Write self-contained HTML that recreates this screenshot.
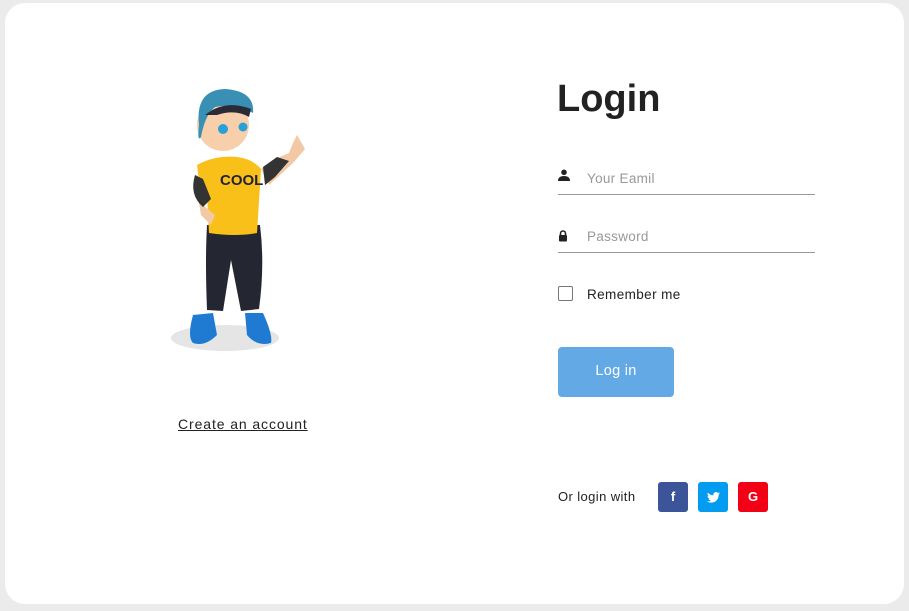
<!DOCTYPE html>
<html><head><meta charset="utf-8"><style>
*{margin:0;padding:0;box-sizing:border-box}
body{width:909px;height:611px;background:#ebebeb;font-family:"Liberation Sans",sans-serif;position:relative;overflow:hidden}
.card{position:absolute;left:5px;top:3px;width:899px;height:601px;background:#fff;border-radius:20px}
.abs{position:absolute}
h1{position:absolute;left:557px;top:78px;font-size:38px;font-weight:bold;color:#222;letter-spacing:0px}
.inp{position:absolute;left:558px;width:257px;border-bottom:1px solid #999;height:20px}
.ph{position:absolute;left:29px;top:-4px;font-size:13.5px;color:#999;letter-spacing:0.3px}
.lbl{font-size:13.5px;color:#222;letter-spacing:0.4px}
.btn{position:absolute;left:558px;top:347px;width:116px;height:50px;background:#63a9e6;border-radius:4px;color:#fff;font-size:14.5px;text-align:center;line-height:48px;letter-spacing:0.3px}
.soc{position:absolute;top:482px;width:30px;height:30px;border-radius:3px;color:#fff;font-weight:bold;text-align:center;line-height:30px;font-size:13px}
</style></head><body>
<div class="card"></div>
<h1>Login</h1>
<div class="inp" style="top:175px"><svg class="abs" style="left:0;top:-6px" width="12" height="12" viewBox="0 0 12 12"><circle cx="6" cy="3.3" r="2.8" fill="#222"/><path d="M0 12 Q0 7 6 7 Q12 7 12 12Z" fill="#222"/></svg><span class="ph">Your Eamil</span></div>
<div class="inp" style="top:233px"><svg class="abs" style="left:0;top:-3px" width="10" height="12" viewBox="0 0 10 12"><path d="M2.5 5V3.5a2.5 2.5 0 0 1 5 0V5" stroke="#222" stroke-width="1.6" fill="none"/><rect x="1" y="5" width="8" height="6.5" rx="1" fill="#222"/></svg><span class="ph">Password</span></div>
<div class="abs" style="left:558px;top:286px;width:15px;height:15px;border:1px solid #777;border-radius:2px"></div>
<div class="abs lbl" style="left:587px;top:287px">Remember me</div>
<div class="btn">Log in</div>
<div class="abs lbl" style="left:558px;top:489px;font-size:13px">Or login with</div>
<div class="soc" style="left:658px;background:#3b5598">f</div>
<div class="soc" style="left:698px;background:#039cf0"><svg width="13" height="11" viewBox="0 0 24 20" style="vertical-align:middle"><path d="M24 2.4a10 10 0 0 1-2.8.8A5 5 0 0 0 23.3.4a10 10 0 0 1-3.1 1.2A4.9 4.9 0 0 0 11.8 6 14 14 0 0 1 1.7.9a4.9 4.9 0 0 0 1.5 6.6A4.9 4.9 0 0 1 1 6.9a4.9 4.9 0 0 0 3.9 4.9 5 5 0 0 1-2.2.1 4.9 4.9 0 0 0 4.6 3.4A9.9 9.9 0 0 1 0 17.3 14 14 0 0 0 7.5 19.5c9.1 0 14-7.5 14-14v-.6A10 10 0 0 0 24 2.4z" fill="#fff"/></svg></div>
<div class="soc" style="left:738px;background:#f20015">G</div>
<div class="abs" style="left:178px;top:416px;font-size:14px;color:#222;text-decoration:underline;letter-spacing:0.9px">Create an account</div>
<svg class="abs" style="left:165px;top:85px" width="150" height="272" viewBox="0 0 150 272">
<ellipse cx="60" cy="253" rx="54" ry="13" fill="#e5e5e5"/>
<path d="M42 140 Q40 175 42 225 L58 226 L66 175 L76 226 L94 224 Q100 180 95 140Z" fill="#242632"/>
<path d="M28 230 L48 228 L52 250 Q40 262 28 258 Q22 252 28 230Z" fill="#1f7bd1"/>
<path d="M80 228 L98 228 Q108 250 106 258 Q92 262 82 250Z" fill="#1f7bd1"/>
<path d="M32 80 Q50 70 72 72 Q88 74 96 84 L92 148 Q70 152 44 148 L42 110 L36 120 L34 95Z" fill="#f8c018"/>
<path d="M32 88 L38 120 L50 130 L46 140 L36 130 L34 118 Z" fill="#f2c9a4"/>
<path d="M30 90 Q24 110 38 122 L46 114 L38 94Z" fill="#333"/>
<path d="M96 84 L110 74 L124 68 L128 58 L132 50 L140 64 L128 78 L104 100Z" fill="#f2c9a4"/>
<path d="M98 82 L112 72 L124 76 L110 92 L100 100Z" fill="#333"/>
<circle cx="58" cy="40" r="26" fill="#f7d0ab"/>
<path d="M34 40 Q30 5 60 4 Q90 6 88 28 Q70 18 50 22 Q40 30 36 52 Q32 58 34 40Z" fill="#3a8fb4"/>
<path d="M40 30 Q60 14 86 24 L84 32 Q70 24 52 30Z" fill="#2b2b38"/>
<circle cx="58" cy="44" r="5" fill="#2aa0d8"/><circle cx="78" cy="42" r="4.5" fill="#2aa0d8"/>
<text x="55" y="100" font-family="Liberation Sans" font-size="15" font-weight="bold" fill="#232238">COOL</text>
</svg>
</body></html>
